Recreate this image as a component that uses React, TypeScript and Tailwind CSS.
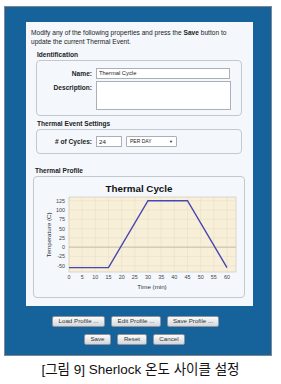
const xs = [0, 5, 10, 15, 20, 25, 30, 35, 40, 45, 50, 55, 60];
const ys = [125, 100, 75, 50, 25, 0, -25, -50];

// chart coordinates inside the Thermal Profile box
const px = (t: number) => 35 + t * 2.633;
const py = (v: number) => 23.7 - (v - 125) * 0.3716;

function ThermalChart() {
  const points = [
    [0, -55],
    [15, -55],
    [30, 125],
    [45, 125],
    [60, -55],
  ]
    .map(([t, v]) => `${px(t)},${py(v)}`)
    .join(" ");

  return (
    <svg width="210" height="120" viewBox="0 0 210 120" className="block">
      <text x="105" y="15" textAnchor="middle" fontSize="9.8" fontWeight="bold" fill="#111">
        Thermal Cycle
      </text>
      <rect x="35" y="20" width="167" height="75" fill="#f8efd9" stroke="#c9c2b2" strokeWidth="0.6" />
      {xs.map((t) => (
        <line key={`gx${t}`} x1={px(t)} x2={px(t)} y1="20" y2="95" stroke="#e7dcc2" strokeWidth="0.5" />
      ))}
      {ys.map((v) => (
        <line key={`gy${v}`} x1="35" x2="202" y1={py(v)} y2={py(v)} stroke="#e7dcc2" strokeWidth="0.5" />
      ))}
      <line x1="35" x2="202" y1={py(0)} y2={py(0)} stroke="#b8b2a6" strokeWidth="0.8" />
      <polyline points={points} fill="none" stroke="#4646b4" strokeWidth="1.4" />
      {ys.map((v) => (
        <text key={`ly${v}`} x="31" y={py(v) + 2} textAnchor="end" fontSize="5.4" fill="#444">
          {v}
        </text>
      ))}
      {xs.map((t) => (
        <text key={`lx${t}`} x={px(t)} y="102" textAnchor="middle" fontSize="5.4" fill="#444">
          {t}
        </text>
      ))}
      <text x="118" y="111.5" textAnchor="middle" fontSize="6.2" fill="#333">
        Time (min)
      </text>
      <text
        x="0"
        y="0"
        transform="translate(17 58) rotate(-90)"
        textAnchor="middle"
        fontSize="6.2"
        fill="#333"
      >
        Temperature (C)
      </text>
    </svg>
  );
}

function Btn({ label, w }: { label: string; w: string }) {
  return (
    <button
      type="button"
      className={`${w} h-[11px] rounded-[2px] border border-[#8f949a] bg-gradient-to-b from-[#fbfbfc] to-[#d3d7dc] text-[6.2px] leading-none text-[#333]`}
    >
      {label}
    </button>
  );
}

export default function App() {
  return (
    <div className="h-[384px] w-[281px] bg-white font-['Liberation_Sans',Arial,sans-serif]">
      <div className="h-[6px]" />
      <div className="ml-[4px] flex h-[350px] w-[268px] flex-col border border-[#7d8791] bg-[#16629a] pl-[21px] pt-[15px]">
        <div className="flex h-[284px] w-[227px] flex-col bg-[#f4f8fc] pt-[7px] text-[6.6px] text-[#222]">
          <p className="ml-[5px] leading-[8.5px]">
            Modify any of the following properties and press the <b>Save</b> button to
            <br />
            update the current Thermal Event.
          </p>

          <p className="ml-[11px] mt-[5px] font-bold leading-[8px]">Identification</p>
          <div className="ml-[10px] mt-[1px] flex h-[56px] w-[206px] flex-col gap-[2px] rounded-[4px] border border-[#c3c8ce] pt-[7px]">
            <div className="flex items-center gap-[4px]">
              <span className="w-[55px] text-right font-bold">Name:</span>
              <div className="flex h-[11px] w-[134px] items-center border border-[#a9b0b8] bg-white pl-[2px] text-[5.8px]">
                Thermal Cycle
              </div>
            </div>
            <div className="flex items-start gap-[4px]">
              <span className="mt-[2px] w-[55px] text-right font-bold">Description:</span>
              <div className="h-[29px] w-[135px] border border-[#a9b0b8] bg-white" />
            </div>
          </div>

          <p className="ml-[11px] mt-[4px] font-bold leading-[8px]">Thermal Event Settings</p>
          <div className="ml-[10px] mt-[1px] flex h-[25px] w-[206px] items-center gap-[4px] rounded-[4px] border border-[#c3c8ce]">
            <span className="w-[55px] text-right font-bold">#&nbsp;of Cycles:</span>
            <div className="flex h-[11px] w-[26px] items-center border border-[#a9b0b8] bg-white pl-[2px] text-[6.2px]">
              24
            </div>
            <div className="flex h-[11px] w-[51px] items-center justify-between rounded-[1px] border border-[#a9b0b8] bg-white pl-[3px] pr-[3px] text-[5px]">
              <span>PER DAY</span>
              <span className="text-[4px]">▼</span>
            </div>
          </div>

          <p className="ml-[9px] mt-[13px] font-bold leading-[8px]">Thermal Profile</p>
          <div className="ml-[7px] mt-[1px] h-[122px] w-[212px] rounded-[4px] border border-[#c3c8ce]">
            <ThermalChart />
          </div>
        </div>

        <div className="ml-[-21px] mt-[10px] flex w-[266px] flex-col items-center gap-[7px]">
          <div className="flex gap-[6px] pr-[5px]">
            <Btn label="Load Profile ..." w="w-[53px]" />
            <Btn label="Edit Profile ..." w="w-[50px]" />
            <Btn label="Save Profile ..." w="w-[52px]" />
          </div>
          <div className="flex gap-[6px] pr-[7px]">
            <Btn label="Save" w="w-[27px]" />
            <Btn label="Reset" w="w-[30px]" />
            <Btn label="Cancel" w="w-[32px]" />
          </div>
        </div>
      </div>
      <p className="mt-[5px] text-center font-['Liberation_Sans','Noto_Sans_CJK_KR',sans-serif] text-[13.5px] leading-[17px] text-[#111]">
        [그림 9] Sherlock 온도 사이클 설정
      </p>
    </div>
  );
}
